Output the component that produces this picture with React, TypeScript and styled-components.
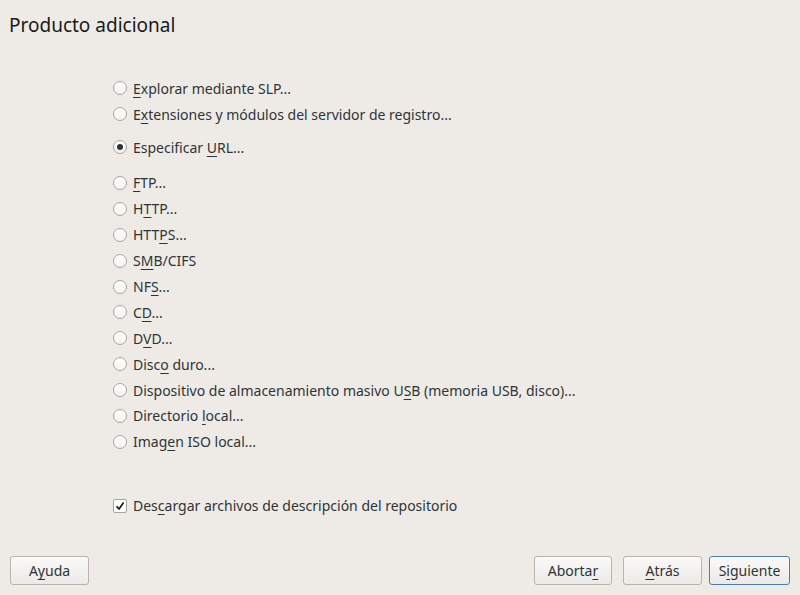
import React from "react";
import styled, { createGlobalStyle } from "styled-components";

const GlobalStyle = createGlobalStyle`
  html, body {
    margin: 0;
    padding: 0;
    background: #eeebe7;
  }
  body {
    font-family: "Noto Sans", "DejaVu Sans", sans-serif;
    color: #2e3436;
  }
`;

const Page = styled.div`
  width: 800px;
  height: 595px;
  box-sizing: border-box;
  display: flex;
  flex-direction: column;
  background: #eeebe7;
  overflow: hidden;
`;

const Title = styled.h1`
  margin: 0;
  padding: 12px 0 0 9px;
  height: 50px;
  box-sizing: border-box;
  font-size: 19px;
  font-weight: 400;
  color: #1a1a1a;
  line-height: 26px;
`;

const Content = styled.div`
  flex: 1;
  display: flex;
  flex-direction: column;
  padding: 25px 0 0 113px;
`;

const Group = styled.div<{ $mb?: number }>`
  display: flex;
  flex-direction: column;
  margin-bottom: ${(p) => p.$mb ?? 0}px;
`;

const Row = styled.label<{ $h?: number }>`
  display: flex;
  align-items: center;
  height: ${(p) => p.$h ?? 26}px;
  gap: 6px;
  font-size: 14px;
  color: #2e3436;
  cursor: default;
`;

const Radio = styled.span<{ $on?: boolean }>`
  width: 12px;
  height: 12px;
  border-radius: 50%;
  border: 1px solid #a6a6a0;
  background: linear-gradient(#ffffff, #f4f3f1);
  display: flex;
  align-items: center;
  justify-content: center;
  flex: none;
  &::after {
    content: "";
    width: 6px;
    height: 6px;
    border-radius: 50%;
    background: #2e3436;
    display: ${(p) => (p.$on ? "block" : "none")};
  }
`;

const Check = styled.span`
  width: 12px;
  height: 12px;
  border: 1px solid #a6a6a0;
  border-radius: 2px;
  background: #ffffff;
  display: flex;
  align-items: center;
  justify-content: center;
  flex: none;
`;

const U = styled.span`
  text-decoration: underline;
  text-underline-offset: 3px;
  text-decoration-thickness: 1px;
`;

const Footer = styled.div`
  display: flex;
  align-items: center;
  padding: 0 10px 10px 10px;
  gap: 11px;
`;

const Spacer = styled.div`
  flex: 1;
`;

const Button = styled.button<{ $w: number; $default?: boolean }>`
  width: ${(p) => p.$w}px;
  height: 29px;
  box-sizing: border-box;
  font-family: inherit;
  font-size: 14px;
  color: #2e3436;
  border-radius: 3px;
  border: 1px solid ${(p) => (p.$default ? "#4a7fb0" : "#b8b4ad")};
  background: linear-gradient(#fafaf9, #ebe9e6);
  padding: 0;
  margin-left: ${(p) => (p.$default ? "-4px" : "0")};
`;

const Label: React.FC<{ text: string; u: number }> = ({ text, u }) => (
  <span>
    {text.slice(0, u)}
    <U>{text[u]}</U>
    {text.slice(u + 1)}
  </span>
);

const sources: [string, number][] = [
  ["FTP...", 0],
  ["HTTP...", 1],
  ["HTTPS...", 3],
  ["SMB/CIFS", 1],
  ["NFS...", 2],
  ["CD...", 1],
  ["DVD...", 1],
  ["Disco duro...", 4],
  ["Dispositivo de almacenamiento masivo USB (memoria USB, disco)...", 38],
  ["Directorio local...", 11],
  ["Imagen ISO local...", 4],
];

const App: React.FC = () => (
  <Page>
    <GlobalStyle />
    <Title>Producto adicional</Title>
    <Content>
      <Group $mb={7}>
        <Row>
          <Radio />
          <Label text="Explorar mediante SLP..." u={0} />
        </Row>
        <Row>
          <Radio />
          <Label text="Extensiones y módulos del servidor de registro..." u={1} />
        </Row>
      </Group>
      <Group $mb={10}>
        <Row>
          <Radio $on />
          <Label text="Especificar URL..." u={12} />
        </Row>
      </Group>
      <Group $mb={38}>
        {sources.map(([t, u]) => (
          <Row key={t} $h={25.9}>
            <Radio />
            <Label text={t} u={u} />
          </Row>
        ))}
      </Group>
      <Row>
        <Check>
          <svg width="10" height="10" viewBox="0 0 10 10">
            <path d="M1.5 5.2 L4 8 L8.6 1.4" fill="none" stroke="#1a1a1a" strokeWidth="1.7" />
          </svg>
        </Check>
        <Label text="Descargar archivos de descripción del repositorio" u={3} />
      </Row>
    </Content>
    <Footer>
      <Button $w={79}>
        <Label text="Ayuda" u={1} />
      </Button>
      <Spacer />
      <Button $w={78}>
        <Label text="Abortar" u={6} />
      </Button>
      <Button $w={79}>
        <Label text="Atrás" u={0} />
      </Button>
      <Button $w={81} $default>
        <Label text="Siguiente" u={1} />
      </Button>
    </Footer>
  </Page>
);

export default App;
